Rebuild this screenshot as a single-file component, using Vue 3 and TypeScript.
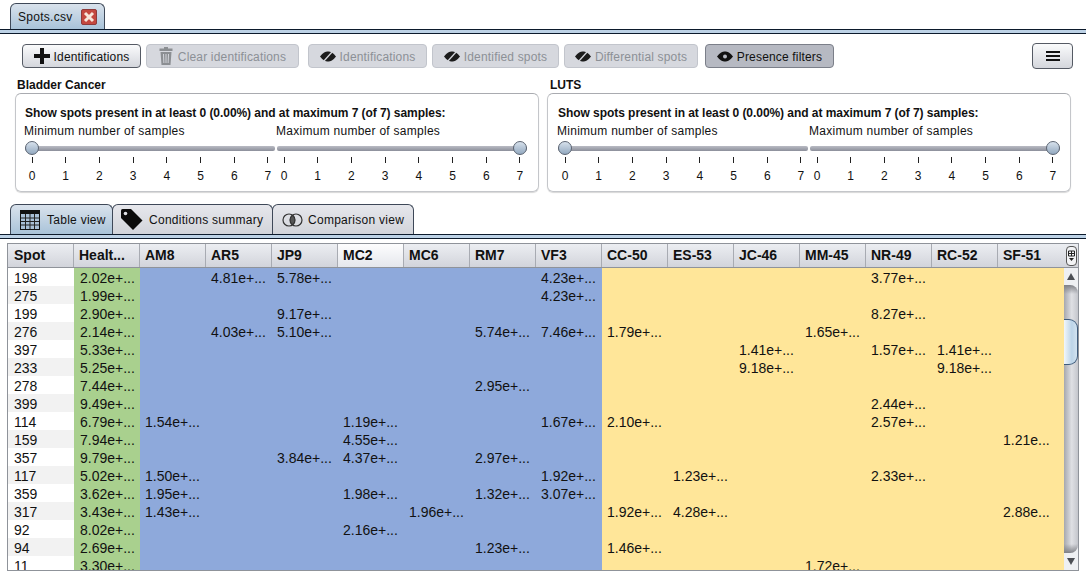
<script setup lang="ts">
const columns = ['Spot','Healt...','AM8','AR5','JP9','MC2','MC6','RM7','VF3','CC-50','ES-53','JC-46','MM-45','NR-49','RC-52','SF-51']
type Row = { spot: string; h: string; v: Record<number, string> }
const rows: Row[] = [
  { spot:'198', h:'2.02', v:{3:'4.81',4:'5.78',8:'4.23',13:'3.77'} },
  { spot:'275', h:'1.99', v:{8:'4.23'} },
  { spot:'199', h:'2.90', v:{4:'9.17',13:'8.27'} },
  { spot:'276', h:'2.14', v:{3:'4.03',4:'5.10',7:'5.74',8:'7.46',9:'1.79',12:'1.65'} },
  { spot:'397', h:'5.33', v:{11:'1.41',13:'1.57',14:'1.41'} },
  { spot:'233', h:'5.25', v:{11:'9.18',14:'9.18'} },
  { spot:'278', h:'7.44', v:{7:'2.95'} },
  { spot:'399', h:'9.49', v:{13:'2.44'} },
  { spot:'114', h:'6.79', v:{2:'1.54',5:'1.19',8:'1.67',9:'2.10',13:'2.57'} },
  { spot:'159', h:'7.94', v:{5:'4.55',15:'1.21'} },
  { spot:'357', h:'9.79', v:{4:'3.84',5:'4.37',7:'2.97'} },
  { spot:'117', h:'5.02', v:{2:'1.50',8:'1.92',10:'1.23',13:'2.33'} },
  { spot:'359', h:'3.62', v:{2:'1.95',5:'1.98',7:'1.32',8:'3.07'} },
  { spot:'317', h:'3.43', v:{2:'1.43',6:'1.96',9:'1.92',10:'4.28',15:'2.88'} },
  { spot:'92', h:'8.02', v:{5:'2.16'} },
  { spot:'94', h:'2.69', v:{7:'1.23',9:'1.46'} },
  { spot:'11', h:'3.30', v:{12:'1.72'} },
]
function cell(r: Row, c: number): string {
  if (c === 0) return r.spot
  if (c === 1) return r.h + 'e+...'
  const t = r.v[c]
  if (!t) return ''
  return t + (c === 15 ? 'e...' : 'e+...')
}
function cellClass(i: number, c: number): string {
  if (c === 0) return i % 2 ? 'odd' : 'even'
  if (c === 1) return 'green'
  return c <= 8 ? 'blue' : 'yellow'
}
const panels = ['Bladder Cancer', 'LUTS']
const ticks = [0,1,2,3,4,5,6,7]
const filters = [
  { label:'Identifications', width:'119px' },
  { label:'Identified spots', width:'127px' },
  { label:'Differential spots', width:'134px' },
]
</script>

<template>
  <div class="page">
    <div class="tabstrip">
      <div class="tab file-tab">
        <span>Spots.csv</span>
        <svg class="close" width="16" height="16" viewBox="0 0 16 16">
          <rect x="0.5" y="0.5" width="15" height="15" rx="1.5" fill="#c4483f" stroke="#8e3a3a"/>
          <path d="M4 4l8 8M12 4l-8 8" stroke="#f8e6da" stroke-width="3"/>
        </svg>
      </div>
    </div>
    <div class="rule"></div>

    <div class="toolbar">
      <button class="btn b1">
        <svg width="16" height="16" viewBox="0 0 16 16"><path d="M6 0h4v6h6v4h-6v6H6v-6H0V6h6z" fill="#111"/></svg>
        <span>Identifications</span>
      </button>
      <button class="btn dis b2">
        <svg width="14" height="18" viewBox="0 0 14 18"><path d="M5 0h4v1.500h4.500V4H.5V1.500H5zM1.500 5h11l-1 13h-9z" fill="#8b8e92"/><path d="M4.500 7l.4 9M7 7v9M9.500 7l-.4 9" stroke="#d4d6dc" stroke-width="1"/></svg>
        <span>Clear identifications</span>
      </button>
      <button v-for="f in filters" :key="f.label" class="btn dis" :style="{ width: f.width }">
        <svg width="16" height="11" viewBox="0 0 16 11"><path d="M0 5.500C3 1.500 5.500 0.500 8 0.500s5 1 8 5c-3 4-5.500 5-8 5s-5-1-8-5z" fill="#1c1c1c"/><path d="M3.500 10.500L12.500 .5" stroke="#d4d6dc" stroke-width="1.300"/></svg>
        <span>{{ f.label }}</span>
      </button>
      <button class="btn pressed">
        <svg width="16" height="11" viewBox="0 0 16 11"><path d="M0 5.500C3 1.500 5.500 0.500 8 0.500s5 1 8 5c-3 4-5.500 5-8 5s-5-1-8-5z" fill="#111"/><circle cx="8" cy="5.500" r="2" fill="#b6b9c2"/></svg>
        <span>Presence filters</span>
      </button>
      <button class="btn menu">
        <svg width="14" height="12" viewBox="0 0 14 12"><path d="M0 1h14v2H0zM0 5h14v2H0zM0 9h14v2H0z" fill="#111"/></svg>
      </button>
    </div>

    <div class="panels">
      <section v-for="p in panels" :key="p" class="group">
        <h3>{{ p }}</h3>
        <div class="box">
          <p class="heading">Show spots present in at least 0 (0.00%) and at maximum 7 (of 7) samples:</p>
          <div class="sliders">
            <div v-for="(s, si) in ['Minimum number of samples','Maximum number of samples']" :key="s" class="slider">
              <div class="slabel">{{ s }}</div>
              <div class="track">
                <span class="thumb" :class="si === 0 ? 'left' : 'right'"></span>
              </div>
              <div class="ticks">
                <div v-for="t in ticks" :key="t" class="tick"><i></i><span>{{ t }}</span></div>
              </div>
            </div>
          </div>
        </div>
      </section>
    </div>

    <div class="tabstrip views">
      <div class="tab view-tab active">
        <svg width="20" height="20" viewBox="0 0 20 20">
          <rect x="0" y="0" width="20" height="20" fill="#111"/>
          <rect x="1" y="4" width="18" height="15" fill="#a9c0d6"/>
          <path d="M1 8h18M1 11.500h18M1 15h18M5.500 4v15M10 4v15M14.500 4v15" stroke="#222" stroke-width="1"/>
        </svg>
        <span>Table view</span>
      </div>
      <div class="tab view-tab second">
        <svg width="22" height="21" viewBox="0 0 22 21"><path d="M0 1.500Q0 0 1.500 0H10l11.500 11.500L12 21 0 9z" fill="#0b0b0b"/><circle cx="4.500" cy="4.500" r="1.800" fill="#dfe0e5"/></svg>
        <span>Conditions summary</span>
      </div>
      <div class="tab view-tab third">
        <svg width="21" height="14" viewBox="0 0 21 14">
          <path d="M10.500 2a6 6 0 0 1 0 10a6 6 0 0 1 0-10z" fill="#555"/>
          <circle cx="7" cy="7" r="6" fill="none" stroke="#333" stroke-width="1.200"/>
          <circle cx="14" cy="7" r="6" fill="none" stroke="#333" stroke-width="1.200"/>
        </svg>
        <span>Comparison view</span>
      </div>
    </div>
    <div class="rule"></div>

    <div class="table">
      <div class="body">
        <div class="thead">
          <div v-for="(c, ci) in columns" :key="c" class="th" :class="{ hot: ci === 5 }">{{ c }}</div>
        </div>
        <div class="tbody">
          <div v-for="(r, ri) in rows" :key="r.spot" class="tr">
            <div v-for="(c, ci) in columns" :key="c" class="td" :class="cellClass(ri, ci)">{{ cell(r, ci) }}</div>
          </div>
        </div>
      </div>
      <div class="side">
        <div class="corner">
          <svg width="11" height="20" viewBox="0 0 11 20">
            <rect x="0.500" y="0.500" width="10" height="19" rx="3.500" fill="#f2f3f5" stroke="#555"/>
            <path d="M2.500 5h6v5h-6zM2.500 7.500h6M5.500 5v5" fill="none" stroke="#222"/>
            <path d="M3 12h5l-2.500 3z" fill="#222"/>
          </svg>
        </div>
        <div class="sbar">
          <div class="arrow"><span class="up"></span></div>
          <div class="strack">
            <div class="sthumb"></div>
          </div>
          <div class="arrow"><span class="down"></span></div>
        </div>
      </div>
    </div>
  </div>
</template>

<style scoped>
.page {
  width: 1086px;
  height: 574px;
  overflow: hidden;
  background: #fff;
  font-family: "Liberation Sans", Arial, sans-serif;
  font-size: 12px;
  letter-spacing: 0.27px;
  color: #111;
  display: flex;
  flex-direction: column;
}
.tabstrip {
  height: 29px;
  padding: 3px 0 0 10px;
  box-sizing: border-box;
  display: flex;
  align-items: stretch;
  flex: none;
}
.rule {
  flex: none;
  height: 3px;
  background: #bdd2e6;
  border-top: 1px solid #0c1a2c;
  border-bottom: 1px solid #0c1a2c;
}
.tab {
  display: flex;
  align-items: center;
  border: 1px solid #3e4858;
  border-bottom: none;
  border-radius: 6px 6px 0 0;
  box-sizing: border-box;
  background: linear-gradient(#e6e7ec, #d2d4da);
}
.file-tab {
  width: 95px;
  padding: 0 0 0 7px;
  gap: 9px;
  background: linear-gradient(#d9e2ec, #a9c3d9);
}
.close { flex: none; }
.toolbar {
  display: flex;
  align-items: center;
  height: 26px;
  margin: 9px 0 0;
  padding: 0 0 0 22px;
  flex: none;
}
button {
  font: inherit;
  letter-spacing: 0.17px;
  padding: 0;
  box-sizing: border-box;
}
.btn {
  height: 24px;
  margin-right: 5px;
  display: flex;
  align-items: center;
  justify-content: center;
  gap: 4px;
  border-radius: 4px;
  border: 1px solid #555a64;
  color: #111;
  background: linear-gradient(#fafbfc, #d4d6dc);
}
.btn span { position: relative; top: 1px; }
.b1 { width: 119px; }
.b2 { width: 153px; margin-right: 9px; gap: 5px; }
.dis {
  border-color: #c2c5cc;
  color: #8c9096;
  background: #d6d8de;
}
.pressed {
  width: 129px;
  margin-left: 2px;
  border-color: #7b7f89;
  background: #b6b9c2;
}
.menu {
  width: 41px;
  height: 26px;
  margin: 0 13px 0 auto;
}
.panels {
  display: flex;
  gap: 8px;
  padding: 0 15px;
  margin-top: 9px;
  flex: none;
}
.group { width: 524px; }
.group:last-child h3 { padding-left: 3px; }
.group:last-child .sliders { margin-left: 1px; }
.group:last-child .heading { padding-left: 1px; }
h3 {
  margin: 0;
  font-size: 12px;
  letter-spacing: 0;
  line-height: 14px;
  font-weight: bold;
  padding-left: 2px;
  height: 15px;
}
.box {
  height: 99px;
  box-sizing: border-box;
  border: 1px solid #c4c6ca;
  border-top-color: #a9abb0;
  border-radius: 6px;
  padding: 0 10px 0 9px;
  box-shadow: 0 1px 1px #d8d8d8;
}
.heading {
  margin: 12px 0 0;
  font-weight: bold;
  font-size: 12px;
  letter-spacing: -0.05px;
  line-height: 14px;
}
.sliders {
  display: flex;
  gap: 2px;
  margin-top: 4px;
}
.slider { width: 250px; flex: none; }
.slabel { line-height: 14px; height: 15px; margin-left: -1px; white-space: nowrap; }
.track {
  position: relative;
  height: 5px;
  margin-top: 7px;
  border-radius: 2px;
  background: linear-gradient(#b9bbc4, #8c8f9a);
}
.thumb {
  position: absolute;
  top: -5px;
  width: 14px;
  height: 14px;
  box-sizing: border-box;
  border-radius: 50%;
  border: 1px solid #5b6472;
  background: linear-gradient(#d7e1ec, #93a9c0);
}
.thumb.left { left: 0; }
.thumb.right { right: 0; }
.ticks {
  display: flex;
  justify-content: space-between;
  margin-top: 6px;
  padding: 0 2px;
}
.tick {
  width: 10px;
  display: flex;
  flex-direction: column;
  align-items: center;
}
.tick i {
  width: 1px;
  height: 6px;
  background: #222;
}
.tick span { margin-top: 6px; line-height: 14px; letter-spacing: 0; }
.views {
  height: 30px;
  margin-top: 12px;
  padding: 0 0 0 10px;
}
.view-tab {
  margin-right: -1px;
  padding-left: 7px;
  gap: 7px;
}
.view-tab.active {
  width: 103px;
  padding-left: 9px;
  gap: 7px;
  background: linear-gradient(#d9e2ec, #a9c3d9);
}
.second { width: 161px; padding-left: 8px; gap: 6px; }
.third { width: 142px; padding-left: 9px; gap: 5px; }
.table {
  flex: none;
  margin: 4px 0 0 7px;
  width: 1072px;
  height: 328px;
  box-sizing: border-box;
  border: 1px solid #8f939a;
  display: flex;
  overflow: hidden;
  letter-spacing: 0;
}
.body {
  width: 1056px;
  flex: none;
  overflow: hidden;
}
.thead {
  display: flex;
  height: 24px;
  box-sizing: border-box;
  border-bottom: 1px solid #8f939a;
}
.th {
  width: 66px;
  flex: none;
  box-sizing: border-box;
  padding-left: 5px;
  border-right: 1px solid #a8abb2;
  font-size: 14px;
  font-weight: bold;
  line-height: 23px;
  white-space: nowrap;
  background: linear-gradient(#eceef2, #d2d4db);
}
.th:first-child { padding-left: 6px; }
.th:last-child { border-right: none; }
.th.hot { background: linear-gradient(#fdfdfe, #e5e7ec); }
.tr {
  display: flex;
  height: 18px;
}
.td {
  width: 66px;
  flex: none;
  box-sizing: border-box;
  padding-left: 5px;
  font-size: 14px;
  line-height: 21px;
  white-space: nowrap;
  overflow: hidden;
}
.td:first-child, .td.green { padding-left: 6px; }
.even { background: #fff; }
.odd { background: #f2f2f2; }
.green { background: #a9d08e; }
.blue { background: #8ea9db; }
.yellow { background: #ffe699; }
.side {
  width: 14px;
  flex: none;
  display: flex;
  flex-direction: column;
}
.corner {
  height: 24px;
  box-sizing: border-box;
  border-bottom: 1px solid #8f939a;
  display: flex;
  align-items: center;
  justify-content: center;
  background: linear-gradient(#eceef2, #d2d4db);
}
.sbar {
  flex: 1;
  display: flex;
  flex-direction: column;
  background: #eef0f3;
}
.arrow {
  height: 17px;
  flex: none;
  background: #eef0f3;
  display: flex;
  align-items: center;
  justify-content: center;
}
.up, .down {
  width: 0;
  height: 0;
  border-left: 4px solid transparent;
  border-right: 4px solid transparent;
}
.up { border-bottom: 7px solid #4c4f55; }
.down { border-top: 7px solid #4c4f55; }
.strack {
  flex: 1;
  position: relative;
  background: linear-gradient(90deg, #a6a8ae, #dfe0e4 55%, #c4c6cc);
  border-radius: 0 8px 8px 0;
  overflow: hidden;
}
.strack::before, .strack::after {
  content: "";
  position: absolute;
  left: 0;
  right: 0;
  height: 9px;
}
.strack::before { top: 0; background: linear-gradient(#7f8187, rgba(127,129,135,0)); }
.strack::after { bottom: 0; background: linear-gradient(rgba(127,129,135,0), #7f8187); }
.sthumb {
  position: absolute;
  left: 0;
  right: 0;
  top: 34px;
  height: 46px;
  box-sizing: border-box;
  border: 1px solid #3f5c7c;
  border-left: none;
  border-radius: 0 9px 9px 0;
  background: linear-gradient(90deg, #f2f7fb, #bcd4e8 60%, #d3e3f0);
}
</style>

<style>
html, body { margin: 0; background: #fff; }
</style>
